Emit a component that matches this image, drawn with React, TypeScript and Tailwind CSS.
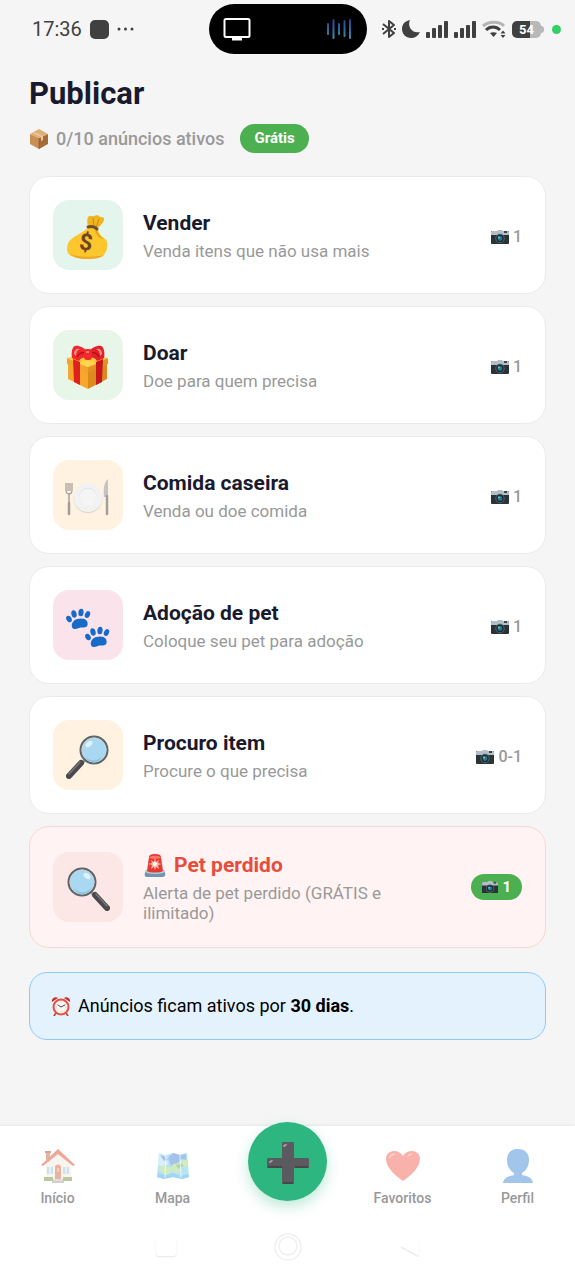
import React, { useState } from 'react';

interface IconProps {
  className?: string;
}

interface Category {
  id: string;
  title: string;
  description: string;
  photos: string;
  tile: string;
  icon: React.ReactNode;
  urgent?: boolean;
}

const MoneyBag: React.FC<IconProps> = ({ className }) => (
  <svg viewBox="0 0 44 44" className={className} aria-hidden="true">
    <path d="M22 12C21 8 21 4 22 2c2-2 4 0 6-1 2-1 5-1 6 1 2 0 4 0 4 2 0 3-3 6-7 10z" fill="#f0b41f" />
    <path d="M27 3l1 9M33 4l-3 9" stroke="#c98a12" strokeWidth="1" fill="none" />
    <path d="M22 13c4-1 8 0 10 2 1 3 2 5 6 8 3 2 4 5 3 9 0 8-6 11-20 11S1 41 1 34C1 25 8 22 13 19c4-2 6-4 9-6z" fill="#fcc62c" />
    <path d="M31 15c1 4 3 6 7 9-4 0-8-4-9-9z" fill="#e5a51a" />
    <path d="M4 39c5 3 29 4 35 0-3 4-9 5-18 5S7 42 4 39z" fill="#f2a91d" />
    <path d="M22 12c4-1 7 0 9 2" stroke="#6d4c30" strokeWidth="3" strokeLinecap="round" fill="none" />
    <text x="20" y="35" textAnchor="middle" fontFamily="Roboto, sans-serif" fontWeight="700" fontSize="23" fill="#6d4526" transform="rotate(7 20 27)">$</text>
  </svg>
);

const Gift: React.FC<IconProps> = ({ className }) => (
  <svg viewBox="0 0 44 44" className={className} aria-hidden="true">
    <path d="M2 19l20 6v19L2 34z" fill="#f6a72c" />
    <path d="M41 19l-19 6v19l19-10z" fill="#dc8a1e" />
    <path d="M1 13l21-5 20 5-20 9z" fill="#ffca3c" />
    <path d="M1 13l21 9v6L1 19z" fill="#f2a330" />
    <path d="M42 13l-20 9v6l20-9z" fill="#e29225" />
    <path d="M22 15l8 4-8 3-8-3z" fill="#ffd64d" />
    <path d="M7 14l7 3v23l-6-3z" fill="#e0201f" />
    <path d="M37 14l-7 3v23l6-3z" fill="#c8161d" />
    <path d="M6 13c-1-5 0-11 3-12 4-1 9 2 12 5v6c-4 0-6 1-8 4-3-1-5-2-7-3z" fill="#f0272b" />
    <path d="M38 13c1-5 0-11-3-12-4-1-9 2-12 5v6c4 0 6 1 8 4 3-1 5-2 7-3z" fill="#e31f29" />
    <path d="M8 9c0-4 2-6 6-5-3 1-4 4-4 7zM36 9c0-4-2-6-6-5 3 1 4 4 4 7z" fill="#f98d86" />
    <path d="M11 12c2-4 5-5 8-4M33 12c-2-4-5-5-8-4" stroke="#ad1119" strokeWidth="1.4" fill="none" />
    <rect x="18" y="4" width="8" height="11" rx="3" fill="#ef2b2e" />
    <path d="M20 7h3" stroke="#f98d86" strokeWidth="1.5" />
  </svg>
);

const Plate: React.FC<IconProps> = ({ className }) => (
  <svg viewBox="0 0 44 44" className={className} aria-hidden="true">
    <circle cx="22" cy="23.5" r="14.500" fill="#d6d3ce" />
    <circle cx="22" cy="22.5" r="14.500" fill="#f2f2f2" />
    <circle cx="22" cy="21.5" r="9" fill="#e9e9e9" />
    <circle cx="22" cy="22.5" r="8.500" fill="#f5f5f5" />
    <path d="M0 8v7c0 3 1 4 3 4s3-1 3-4V8M2 8v8M4 8v8" stroke="#a09d99" strokeWidth="1.2" fill="none" />
    <path d="M3 18v12" stroke="#a8a5a1" strokeWidth="1.6" />
    <path d="M3 28v11" stroke="#a09d98" strokeWidth="2.500" strokeLinecap="round" />
    <path d="M42 4c-4 3-5 11-4 18h4z" fill="#c4c4c4" />
    <path d="M41 21v18" stroke="#a3a09b" strokeWidth="2.500" strokeLinecap="round" />
  </svg>
);

const Paw: React.FC<{ transform?: string }> = ({ transform }) => (
  <g transform={transform}>
    <path d="M6 22c-1-4 2-7 5-8 4-1 8-1 10 2 1 2 1 5-1 6-3 1-5 0-7 1-3 1-6 2-7-1z" />
    <ellipse cx="3" cy="14" rx="2.600" ry="3.400" transform="rotate(-30 3 14)" />
    <ellipse cx="8" cy="9" rx="2.600" ry="3.800" transform="rotate(-14 8 9)" />
    <ellipse cx="15" cy="7.500" rx="2.600" ry="3.800" transform="rotate(6 15 7.500)" />
    <ellipse cx="21.500" cy="9.500" rx="2.500" ry="3.600" transform="rotate(24 21.500 9.500)" />
  </g>
);

const Paws: React.FC<IconProps> = ({ className }) => (
  <svg viewBox="0 0 44 44" className={className} aria-hidden="true" fill="#176ac8">
    <Paw />
    <Paw transform="translate(19 18)" />
  </svg>
);

const Magnifier: React.FC<IconProps & { flipped?: boolean }> = ({ className, flipped }) => (
  <svg viewBox="0 0 44 44" className={className} aria-hidden="true">
    <g transform={flipped ? 'translate(44 0) scale(-1 1)' : undefined}>
      <path d="M19 25l-5 5" stroke="#9aa0a3" strokeWidth="3" />
      <path d="M15 28L3 41" stroke="#4a4a4c" strokeWidth="6" strokeLinecap="round" />
      <path d="M14 27L3 39" stroke="#777" strokeWidth="1.500" strokeLinecap="round" />
      <circle cx="28" cy="15" r="13.500" fill="#a9d8f2" stroke="#5f6467" strokeWidth="2" />
      <circle cx="28" cy="15" r="12" fill="none" stroke="#c9d2d6" strokeWidth="1" />
      <path d="M18 20c3 6 13 8 18 1-1 3-4 6-8 6s-8-2-10-7z" fill="#86bfe4" />
      <ellipse cx="23" cy="9" rx="4" ry="2.500" fill="#dff1fb" transform="rotate(-38 23 9)" />
    </g>
  </svg>
);

const Siren: React.FC<IconProps> = ({ className }) => (
  <svg viewBox="0 0 24 24" className={className} aria-hidden="true">
    <path d="M2 20l1-3h18l1 3c1 3-1 4-3 4H5c-3 0-4-1-3-4z" fill="#7195ad" />
    <ellipse cx="12" cy="18.500" rx="9.500" ry="2.500" fill="#b7cedb" />
    <path d="M4 18L6 4c0-2 2-3 6-3s6 1 6 3l2 14c-3 2-13 2-16 0z" fill="#e53a31" />
    <path d="M6 5c1-3 11-3 12 0-3 1-9 1-12 0z" fill="#ff7a68" />
    <path d="M12 5l1 4 3-2-1 3 4 1-4 1 1 4-3-2-1 3-1-3-3 2 1-4-4-1 4-1-1-3 3 2z" fill="#ffb5a4" />
    <circle cx="12" cy="11" r="2" fill="#fff" />
  </svg>
);

const Camera: React.FC<IconProps> = ({ className }) => (
  <svg viewBox="0 0 18 14" className={className} aria-hidden="true">
    <rect y="1" width="18" height="13" rx="1" fill="#2b3336" />
    <path d="M0 5V2l1-1h5l1-1h4l1 1h5l1 1v3z" fill="#b3bfc4" />
    <rect x="13" y="1" width="3" height="2" fill="#39474d" />
    <circle cx="9" cy="8.500" r="4.700" fill="#55646b" />
    <circle cx="9" cy="8.500" r="3.700" fill="#172b35" />
    <circle cx="9" cy="8.500" r="2.400" fill="#28798f" />
    <circle cx="8" cy="7.500" r="1" fill="#7fc4d4" />
  </svg>
);

const Package: React.FC<IconProps> = ({ className }) => (
  <svg viewBox="0 0 20 20" className={className} aria-hidden="true">
    <path d="M1 5l9 4v11l-9-5z" fill="#c98f54" />
    <path d="M19 5l-9 4v11l9-5z" fill="#a66c38" />
    <path d="M1 5l9-5 9 5-9 4z" fill="#dfae74" />
    <path d="M5 3l9 4v4l-2 1V8L4 4z" fill="#ecc998" />
    <path d="M10 9v11" stroke="#8f5b2e" strokeWidth=".7" />
  </svg>
);

const AlarmClock: React.FC<IconProps> = ({ className }) => (
  <svg viewBox="0 0 20 20" className={className} aria-hidden="true">
    <path d="M1 6c-1-3 3-6 6-4zM19 6c1-3-3-6-6-4z" fill="#c9302c" />
    <path d="M5 17l-2 3M15 17l2 3" stroke="#c2413b" strokeWidth="1.600" strokeLinecap="round" />
    <circle cx="10" cy="11" r="8.500" fill="#ea4d43" />
    <circle cx="10" cy="11" r="6.500" fill="#fbf4f1" />
    <path d="M7 9l3 2 4-2" stroke="#4b4b4b" strokeWidth="1" fill="none" strokeLinecap="round" />
    <path d="M10 5.500v1M10 15.500v1M4.500 11h1M14.500 11h1" stroke="#b7a7a4" strokeWidth=".8" />
  </svg>
);

const House: React.FC<IconProps> = ({ className }) => (
  <svg viewBox="0 0 34 34" className={className} aria-hidden="true">
    <path d="M5 3h4v10H5z" fill="#c96a4f" />
    <path d="M4 2h6v2H4z" fill="#a9533c" />
    <path d="M5 15L17 4l13 11v17H5z" fill="#f2eadf" />
    <path d="M0 16L17 0l17 16-2 1L17 5 2 17z" fill="#dc5136" />
    <path d="M6 18h6v7H6zM22 18h6v7h-6z" fill="#9fc4d4" />
    <path d="M9 18v7M25 18v7" stroke="#fff" strokeWidth="1" />
    <path d="M14 17q3-3 6 0v13h-6z" fill="#d4694c" />
    <path d="M16 19h2v4h-2z" fill="#eaa089" />
    <path d="M3 28h9v4H3zM22 28h9v4h-9z" fill="#71924a" />
    <path d="M12 30h10v2H12z" fill="#c2bcb6" />
    <path d="M11 32h12v2H11z" fill="#a7a19b" />
  </svg>
);

const MapIcon: React.FC<IconProps> = ({ className }) => (
  <svg viewBox="0 0 34 34" className={className} aria-hidden="true">
    <path d="M3 4l7 2 7-2 7 2 7-2 2 24-7 2-9-2-9 2-7-2z" fill="#71c9ec" />
    <path d="M3 4l7 2 2 9-5 3-5-2z" fill="#b6e1f5" />
    <path d="M4 6l4 1 4 4-4 1zM12 9l5-5 7 2 6-1v6l-6 1-4 4-5 1z" fill="#4d86dc" />
    <path d="M2 19l6-3 6 3 3-4 5-1 4-4 5 1 1 6-6 2-2 4-5 1-4-3-3 6-5-3z" fill="#a1d881" />
    <path d="M20 16l5-2 3 3-6 3z" fill="#62b05c" />
    <path d="M2 24l8 2 7-2 8 3 7-2 1 3-7 2-9-2-9 2-7-2z" fill="#46aee4" />
    <path d="M10 6l-1 23M24 6l1 23" stroke="#e2f6ff" strokeWidth=".8" />
  </svg>
);

const Heart: React.FC<IconProps> = ({ className }) => (
  <svg viewBox="0 0 34 34" className={className} aria-hidden="true">
    <path d="M17 32C10 27 0 19 0 10 0 1 12-1 17 7c5-8 17-6 17 3 0 9-10 17-17 22z" fill="#f5655b" />
    <path d="M3 10c0-4 3-6 7-5-3 1-5 2-7 5zM21 8c1-3 4-4 6-3-2 1-4 2-6 3z" fill="#ffb0a8" />
  </svg>
);

const Person: React.FC<IconProps> = ({ className }) => (
  <svg viewBox="0 0 34 34" className={className} aria-hidden="true" fill="#478fd8">
    <path d="M17 0c7 0 11 4 11 11 0 6-3 11-7 13v2c5 1 10 2 11 8H2c1-6 6-7 11-8v-2C9 22 6 17 6 11 6 4 10 0 17 0z" />
  </svg>
);

const Plus: React.FC<IconProps> = ({ className }) => (
  <svg viewBox="0 0 42 42" className={className} aria-hidden="true">
    <path d="M15 1q0-1 1-1h10q1 0 1 1v15h14q1 0 1 1v8q0 1-1 1H27v15q0 1-1 1H16q-1 0-1-1V26H1q-1 0-1-1v-8q0-1 1-1h14z" fill="#5a5a5f" />
    <path d="M16 41h10M1 25h14M28 25h13" stroke="#47474b" strokeWidth="2" />
    <path d="M16 5q0-3 4-3-1 3-4 3zM2 21q0-3 4-3-1 3-4 3z" fill="#a8a9ac" />
  </svg>
);

const Signal: React.FC<IconProps> = ({ className }) => (
  <svg viewBox="0 0 22 18" className={className} aria-hidden="true" fill="#3f3f3f">
    <rect y="12" width="4" height="6" rx="1" />
    <rect x="6" y="8" width="4" height="10" rx="1" />
    <rect x="12" y="5" width="4" height="13" rx="1" />
    <rect x="18" y="1" width="4" height="17" rx="1" />
  </svg>
);

const StatusBar: React.FC = () => (
  <header className="grid h-[58px] grid-cols-[1fr_158px_1fr] items-center text-[#404040]">
    <div className="flex items-center gap-2 pl-8">
      <span className="text-[20px] leading-6">17:36</span>
      <span className="h-[19px] w-[19px] rounded-[5px] bg-[#404040]" />
      <svg viewBox="0 0 17 4" className="w-[17px]" fill="#404040" aria-hidden="true">
        <circle cx="2" cy="2" r="1.500" />
        <circle cx="8.500" cy="2" r="1.500" />
        <circle cx="15" cy="2" r="1.500" />
      </svg>
    </div>
    <div className="flex h-[50px] items-center justify-between rounded-full bg-black pr-4 pl-[14px]">
      <svg viewBox="0 0 28 24" className="w-7" fill="none" stroke="#fff" strokeWidth="2" aria-hidden="true">
        <rect x="1.500" y="2" width="25" height="18" rx="1.500" />
        <path d="M9 22h10" strokeWidth="3" />
      </svg>
      <svg viewBox="0 0 24 20" className="w-6" strokeWidth="2" strokeLinecap="round" aria-hidden="true">
        <defs>
          <linearGradient id="wave" x1="0" y1="0" x2="0" y2="20" gradientUnits="userSpaceOnUse">
            <stop offset="0" stopColor="#243c8e" />
            <stop offset="1" stopColor="#3a93ae" />
          </linearGradient>
        </defs>
        <path d="M1 5v10M6.500 1v18M12 5v10M17.500 2v15M23 1v18" stroke="url(#wave)" fill="none" />
      </svg>
    </div>
    <div className="flex items-center justify-end gap-[6px] pr-[14px]">
      <svg viewBox="0 0 14 20" className="w-[14px]" fill="none" stroke="#404040" strokeWidth="2" aria-hidden="true">
        <path d="M1 5l11 9-5 4V2l5 4-11 9" strokeLinejoin="round" />
        <path d="M0 10h2M12 10h2" />
      </svg>
      <svg viewBox="0 0 18 18" className="w-[18px]" fill="#404040" aria-hidden="true">
        <path d="M8 0C5 6 10 14 18 12 16 16 13 18 9 18 4 18 0 14 0 9 0 4 3 1 8 0z" />
      </svg>
      <Signal className="w-[22px]" />
      <Signal className="w-[22px]" />
      <svg viewBox="0 0 24 18" className="w-6" fill="none" strokeWidth="3" aria-hidden="true">
        <path d="M1 6C7 1 17 1 22 6" stroke="#b4b4b4" />
        <path d="M4 10c4-4 10-4 14 0" stroke="#404040" />
        <path d="M8 13c2-1 5-1 7 0l-3.500 4z" fill="#404040" />
        <path d="M18.500 13.500l2.500-3 2.500 3zM18.500 15l2.500 3 2.500-3z" fill="#404040" />
      </svg>
      <span className="relative flex h-[17px] w-8 items-center pr-[3px]">
        <span className="flex h-full w-full items-center justify-center rounded-[5px] bg-[linear-gradient(90deg,#404040_62%,#b8b8b8_62%)] text-[13px] leading-none font-bold text-white">
          54
        </span>
        <span className="absolute right-0 h-[7px] w-[3px] rounded-r bg-[#b8b8b8]" />
      </span>
      <span className="ml-[2px] h-[9px] w-[9px] shrink-0 rounded-full bg-[#35cf68]" />
    </div>
  </header>
);

const CATEGORIES: Category[] = [
  { id: 'sell', title: 'Vender', description: 'Venda itens que não usa mais', photos: '1', tile: 'bg-[#e4f5ee]', icon: <MoneyBag className="h-11 w-11" /> },
  { id: 'give', title: 'Doar', description: 'Doe para quem precisa', photos: '1', tile: 'bg-[#e8f5e9]', icon: <Gift className="h-11 w-11" /> },
  { id: 'food', title: 'Comida caseira', description: 'Venda ou doe comida', photos: '1', tile: 'bg-[#fff2e0]', icon: <Plate className="h-11 w-11 overflow-visible" /> },
  { id: 'adopt', title: 'Adoção de pet', description: 'Coloque seu pet para adoção', photos: '1', tile: 'bg-[#fbe3ec]', icon: <Paws className="h-11 w-11" /> },
  { id: 'wanted', title: 'Procuro item', description: 'Procure o que precisa', photos: '0-1', tile: 'bg-[#fff2e0]', icon: <Magnifier className="h-11 w-11" /> },
  { id: 'lost', title: 'Pet perdido', description: 'Alerta de pet perdido (GRÁTIS e ilimitado)', photos: '1', tile: 'bg-[#fde6e6]', icon: <Magnifier flipped className="h-11 w-11" />, urgent: true },
];

const CategoryCard: React.FC<{ category: Category }> = ({ category }) => {
  const { title, description, photos, tile, icon, urgent } = category;

  return (
    <button
      type="button"
      className={`flex w-full items-center gap-5 rounded-[20px] border px-[23px] text-left ${
        urgent ? 'border-[#fad6d6] bg-[#fff3f3] py-6' : 'border-[#ebebeb] bg-white py-[23px]'
      }`}
    >
      <span className={`flex h-[70px] w-[70px] shrink-0 items-center justify-center rounded-2xl pt-1 ${tile}`}>{icon}</span>
      <span className="min-w-0 flex-1">
        <span className={`flex items-center gap-[7px] text-[21px] leading-7 font-bold ${urgent ? 'text-[#e74c3c]' : 'text-[#1a1a2e]'}`}>
          {urgent && <Siren className="h-6 w-6" />}
          {title}
        </span>
        <span className="mt-1 block max-w-[260px] text-[17px] leading-5 text-[#999]">{description}</span>
      </span>
      {urgent ? (
        <span className="flex items-center gap-1 rounded-full bg-[#4caf50] px-[11px] py-[3px] text-[15px] leading-5 font-bold text-white">
          <Camera className="w-4" />
          {photos}
        </span>
      ) : (
        <span className="flex items-center gap-1 pt-1 text-[16px] leading-5 font-medium text-[#999]">
          <Camera className="w-[18px]" />
          {photos}
        </span>
      )}
    </button>
  );
};

const NavItem: React.FC<{ label: string; icon: React.ReactNode }> = ({ label, icon }) => (
  <a href="#" className="flex flex-col items-center gap-[5px] pt-[23px] text-[14px] leading-5 font-medium text-[#999]">
    <span className="opacity-50">{icon}</span>
    {label}
  </a>
);

const App: React.FC = () => {
  const [activeAds] = useState(0);

  return (
    <div className="flex min-h-screen flex-col bg-[#f5f5f5] font-[Roboto,sans-serif]">
      <StatusBar />

      <main className="flex-1 px-[29px] pt-[18px] pb-8">
        <h1 className="text-[31px] leading-9 font-bold text-[#1a1a2e]">Publicar</h1>
        <div className="mt-3 flex items-center gap-4">
          <p className="flex items-center gap-[7px] text-[18px] leading-6 font-medium text-[#999]">
            <Package className="h-5 w-5" />
            {activeAds}/10 anúncios ativos
          </p>
          <span className="rounded-full bg-[#4caf50] px-[14px] py-1 text-[15px] leading-[21px] font-bold text-white">Grátis</span>
        </div>

        <div className="mt-[23px] flex flex-col gap-3">
          {CATEGORIES.map(category => (
            <CategoryCard key={category.id} category={category} />
          ))}
        </div>

        {/* Ad lifetime notice */}
        <div className="mt-6 flex items-center gap-[7px] rounded-[18px] border border-[#90caf9] bg-[#e3f2fd] px-[21px] py-5 text-[18px] leading-[26px] text-black">
          <AlarmClock className="h-5 w-5" />
          <p>
            Anúncios ficam ativos por <strong className="font-bold">30 dias</strong>.
          </p>
        </div>
      </main>

      <footer className="bg-white shadow-[0_-1px_3px_rgba(0,0,0,0.06)]">
        <nav className="grid h-[92px] grid-cols-5">
          <NavItem label="Início" icon={<House className="h-[34px] w-[34px]" />} />
          <NavItem label="Mapa" icon={<MapIcon className="h-[34px] w-[34px]" />} />
          <button
            type="button"
            aria-label="Publicar"
            className="-mt-1 flex h-[79px] w-[79px] items-center justify-center justify-self-center rounded-full bg-[#2db680] pt-[2px] shadow-[0_6px_14px_rgba(45,182,128,0.3)]"
          >
            <Plus className="h-[42px] w-[42px]" />
          </button>
          <NavItem label="Favoritos" icon={<Heart className="h-[34px] w-[34px]" />} />
          <NavItem label="Perfil" icon={<Person className="h-[34px] w-[34px]" />} />
        </nav>

        {/* System navigation */}
        <div className="flex h-[62px] items-center justify-center gap-[98px] pb-1">
          <span className="h-[18px] w-5 rounded-[3px] bg-white shadow-[0_1px_2px_rgba(0,0,0,0.1)]" />
          <svg viewBox="0 0 28 28" className="w-7" fill="none" stroke="#f0f0f0" strokeWidth="1.500" aria-hidden="true">
            <circle cx="14" cy="14" r="13" />
            <circle cx="14" cy="13" r="9" />
          </svg>
          <svg viewBox="0 0 20 20" className="w-5" fill="none" stroke="#ededed" strokeWidth="1.500" aria-hidden="true">
            <path d="M1 10l18 10" />
            <path d="M19 3v17" stroke="#fafafa" />
          </svg>
        </div>
      </footer>
    </div>
  );
};

export default App;
